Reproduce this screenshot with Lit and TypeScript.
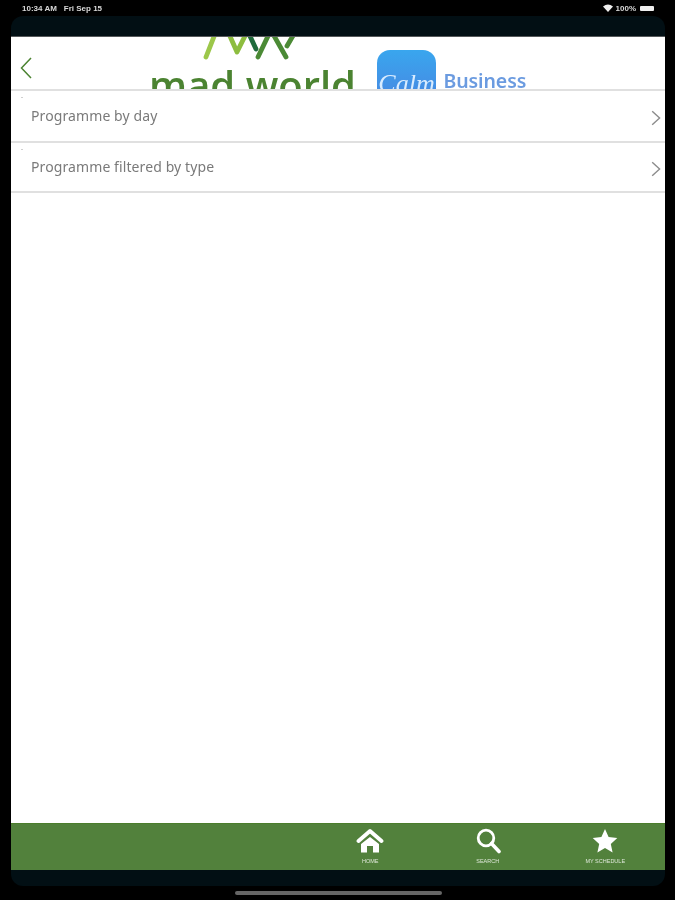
import { LitElement, html, css, svg } from "lit";
import { customElement } from "lit/decorators.js";

const chevron = svg`<svg class="chev" viewBox="0 0 10 16" width="10" height="16"><path d="M1.2 1.2 L8.6 8 L1.2 14.8" fill="none" stroke="#8c8c8c" stroke-width="1.4"/></svg>`;

@customElement("app-root")
export class AppRoot extends LitElement {
  static styles = css`
    :host { display: block; width: 675px; height: 900px; background: #000; font-family: "Noto Sans", "Liberation Sans", sans-serif; overflow: hidden; }
    .page { height: 900px; display: flex; flex-direction: column; }
    .status { height: 16px; flex: none; display: flex; align-items: center; justify-content: space-between; padding: 0 21px 0 22px; color: #d8d8d8; font-size: 8px; font-weight: 600; font-family: "Liberation Sans", sans-serif; filter: blur(0.45px); }
    .status-left { display: flex; gap: 7px; }
    .status-right { display: flex; align-items: center; gap: 3px; }
    .battery { width: 14px; height: 5px; background: #eee; border-radius: 1px; margin-left: 1px; }
    .frame { flex: none; height: 870px; margin: 0 10px 0 11px; background: #020f14; border-radius: 12px; display: flex; flex-direction: column; overflow: hidden; }
    .top-inset { height: 20px; flex: none; }
    .header { height: 53px; flex: none; background: #fff; border-top: 1px solid #55585a; box-sizing: border-box; display: flex; overflow: hidden; }
    .back { flex: none; margin: 20px 0 0 9px; }
    .logo { width: 216px; margin-left: 117px; flex: none; }
    .mark { display: block; margin-left: 50px; height: 28px; filter: blur(0.5px); }
    .wordmark { color: #4b8331; font-size: 40px; font-weight: 600; line-height: 40px; font-family: "Open Sans", "Noto Sans", sans-serif; white-space: nowrap; filter: blur(0.5px); }
    .calm { flex: none; margin: 13px 0 0 12px; width: 59px; height: 59px; border-radius: 13px; background: linear-gradient(180deg, #39a6ee, #4a83e0); color: #d9ecff; font-family: "Liberation Serif", serif; font-style: italic; font-size: 26px; line-height: 68px; text-align: center; overflow: hidden; filter: blur(0.5px); }
    .business { flex: none; margin: 30px 0 0 7.5px; color: #6b9be0; font-size: 19.5px; font-weight: 600; line-height: 28px; letter-spacing: -0.1px; font-family: "Noto Sans", sans-serif; filter: blur(0.5px); }
    .list { flex: 1; background: #fff; display: flex; flex-direction: column; }
    .row { position: relative; height: 52px; box-sizing: border-box; border-top: 2px solid #e0e0e0; display: flex; justify-content: space-between; align-items: center; padding: 0 4px 0 20px; color: #7a7a7a; font-size: 14px; letter-spacing: 0.1px; }
    .row::before { content: ""; position: absolute; left: 10px; top: 6px; width: 2px; height: 1px; background: #cfcfcf; }
    .row:last-child { border-bottom: 2px solid #e0e0e0; }
    .label { filter: blur(0.4px); transform: translateY(-1px); }
    .chev { transform: translateY(2px); }
    .tabbar { height: 47px; flex: none; background: #52813c; border-top: 1px solid #4b7d2c; box-sizing: border-box; display: flex; justify-content: flex-end; padding-right: 1px; }
    .tab { width: 117.5px; display: flex; flex-direction: column; align-items: center; color: #dde7d8; font-size: 5.5px; line-height: 8px; font-family: "Liberation Sans", sans-serif; white-space: nowrap; padding-top: 4px; box-sizing: border-box; gap: 3px; }
    .tab svg { display: block; height: 26px; filter: blur(0.3px); }
    .tab span { filter: blur(0.4px); }
    .bottom-inset { height: 16px; flex: none; }
    .home-wrap { flex: 1; display: flex; justify-content: center; align-items: center; }
    .home-indicator { width: 207px; height: 4px; border-radius: 2px; background: #666; margin-left: 2px; }
  `;

  render() {
    return html`<div class="page">
      <div class="status">
        <div class="status-left"><span>10:34 AM</span><span>Fri Sep 15</span></div>
        <div class="status-right">
          <svg viewBox="0 0 10 8" width="10" height="8"><path d="M0 2.6 Q5 -1.4 10 2.6 L5 8 Z" fill="#eee"/></svg>
          <span>100%</span><div class="battery"></div>
        </div>
      </div>
      <div class="frame">
        <div class="top-inset"></div>
        <div class="header">
          <svg class="back" viewBox="0 0 12 22" width="12" height="22"><path d="M11 1 L1.5 11 L11 21" fill="none" stroke="#4b8331" stroke-width="1.5"/></svg>
          <div class="logo">
            <svg class="mark" viewBox="0 0 100 28" width="100" height="28">
              <path d="M7 20 L16 -3" fill="none" stroke="#9cc74a" stroke-width="4.8" stroke-linecap="round"/>
              <path d="M30 -3 L38 15 L47 -3" fill="none" stroke="#8dbd3f" stroke-width="4.8" stroke-linecap="round" stroke-linejoin="round"/>
              <path d="M50 -3 L57 12" fill="none" stroke="#1f6b3c" stroke-width="4.8" stroke-linecap="round"/>
              <path d="M59 20 L70 -3 M74 -3 L87 20 M88 9 L95 -3" fill="none" stroke="#4b8a35" stroke-width="4.8" stroke-linecap="round" stroke-linejoin="round"/>
            </svg>
            <div class="wordmark">mad world</div>
          </div>
          <div class="calm">Calm</div>
          <div class="business">Business</div>
        </div>
        <div class="list">
          <div class="row"><span class="label">Programme by day</span>${chevron}</div>
          <div class="row"><span class="label">Programme filtered by type</span>${chevron}</div>
        </div>
        <div class="tabbar">
          <div class="tab">
            <svg viewBox="0 0 28 26" width="28"><path d="M2.5 13 L14 3 L25.5 13" fill="none" stroke="#fff" stroke-width="3.8" stroke-linecap="round" stroke-linejoin="round"/><path d="M14 9 L5 16 V24.5 H11 V18 H17 V24.5 H23 V16 Z" fill="#fff"/></svg>
            <span>HOME</span>
          </div>
          <div class="tab">
            <svg viewBox="0 0 28 26" width="28"><circle cx="12" cy="10" r="7.8" fill="none" stroke="#fff" stroke-width="2.8"/><path d="M17.5 15.5 L25 23.5" stroke="#fff" stroke-width="3.6" stroke-linecap="round"/></svg>
            <span>SEARCH</span>
          </div>
          <div class="tab">
            <svg viewBox="0 0 28 26" width="28"><path d="M14 1 L17.6 9 L26.3 10 L19.8 15.9 L21.6 24.5 L14 20.1 L6.4 24.5 L8.2 15.9 L1.7 10 L10.4 9 Z" fill="#fff"/></svg>
            <span>MY SCHEDULE</span>
          </div>
        </div>
        <div class="bottom-inset"></div>
      </div>
      <div class="home-wrap"><div class="home-indicator"></div></div>
    </div>`;
  }
}
